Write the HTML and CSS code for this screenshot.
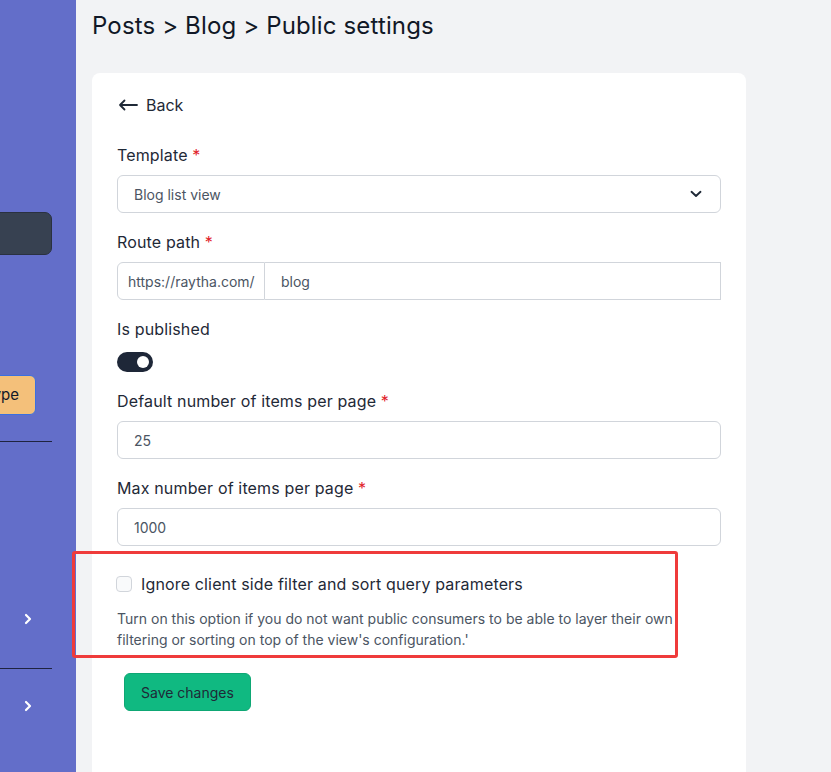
FILE: index.html
```html
<!DOCTYPE html>
<html>
<head>
<meta charset="utf-8">
<link rel="stylesheet" href="styles.css">
</head>
<body>
<div class="layout">
  <aside class="sidebar">
    <div class="sb-dark"></div>
    <div class="sb-orange">Content type</div>
    <hr class="sb-rule sb-rule-1">
    <div class="sb-chev sb-chev-1">
      <svg width="10" height="12" viewBox="0 0 10 12"><path d="M3 2l4 4-4 4" fill="none" stroke="#fff" stroke-width="2.2" stroke-linecap="round" stroke-linejoin="round"/></svg>
    </div>
    <hr class="sb-rule sb-rule-2">
    <div class="sb-chev sb-chev-2">
      <svg width="10" height="12" viewBox="0 0 10 12"><path d="M3 2l4 4-4 4" fill="none" stroke="#fff" stroke-width="2.2" stroke-linecap="round" stroke-linejoin="round"/></svg>
    </div>
  </aside>
  <main class="main">
    <h1 class="title">Posts &gt; Blog &gt; Public settings</h1>
    <section class="card">
      <a class="back">
        <svg width="20" height="12" viewBox="0 0 20 12"><path d="M19 6H2M6.5 1.5L2 6l4.5 4.5" fill="none" stroke="#1f2937" stroke-width="1.8" stroke-linecap="round" stroke-linejoin="round"/></svg>
        <span>Back</span>
      </a>
      <div class="group">
        <label class="label">Template <span class="req">*</span></label>
        <div class="control select">
          <span>Blog list view</span>
          <svg width="12" height="8" viewBox="0 0 12 8"><path d="M1.5 1.8L6 6l4.5-4.2" fill="none" stroke="#1f2937" stroke-width="1.9" stroke-linecap="round" stroke-linejoin="round"/></svg>
        </div>
      </div>
      <div class="group">
        <label class="label">Route path <span class="req">*</span></label>
        <div class="input-group">
          <span class="prefix">https://raytha.com/</span>
          <span class="ig-input">blog</span>
        </div>
      </div>
      <div class="group group-toggle">
        <label class="label">Is published</label>
        <div class="toggle"><span class="knob"></span></div>
      </div>
      <div class="group">
        <label class="label">Default number of items per page <span class="req">*</span></label>
        <div class="control">25</div>
      </div>
      <div class="group">
        <label class="label">Max number of items per page <span class="req">*</span></label>
        <div class="control">1000</div>
      </div>
      <div class="check-section">
        <div class="check-row">
          <span class="checkbox"></span>
          <span class="check-label">Ignore client side filter and sort query parameters</span>
        </div>
        <p class="help">Turn on this option if you do not want public consumers to be able to layer their own filtering or sorting on top of the view's configuration.'</p>
        <div class="highlight"></div>
      </div>
      <button class="save">Save changes</button>
    </section>
  </main>
</div>
</body>
</html>
```

FILE: styles.css
```css
* { box-sizing: border-box; }
html, body { margin: 0; padding: 0; }
body {
  font-family: Inter, "Noto Sans", sans-serif;
  background: #f2f3f5;
  color: #1f2937;
  height: 772px;
  overflow: hidden;
}
.layout { display: flex; height: 772px; }

.sidebar {
  width: 76px;
  flex: 0 0 76px;
  background: #636ec9;
  overflow: hidden;
  display: flex;
  flex-direction: column;
  align-items: flex-end;
  padding-top: 212px;
}
.sb-dark {
  width: 180px;
  height: 43px;
  background: #374151;
  border: 1px solid #2a3140;
  border-radius: 7px;
  margin-right: 24px;
  flex-shrink: 0;
}
.sb-orange {
  width: 170px;
  height: 40px;
  margin-top: 120px;
  margin-right: 40px;
  background: #f4c07a;
  border: 1px solid #3b6fe0;
  border-radius: 6px;
  font-size: 15px;
  line-height: 38px;
  text-align: right;
  padding-right: 16px;
  color: #111827;
  white-space: nowrap;
  flex-shrink: 0;
}
.sb-rule {
  width: 180px;
  margin: 0 24px 0 0;
  border: 0;
  border-top: 1px solid #1f2340;
  flex-shrink: 0;
}
.sb-rule-1 { margin-top: 26px; }
.sb-chev {
  width: 76px;
  display: flex;
  justify-content: flex-start;
  padding-left: 23px;
  flex-shrink: 0;
}
.sb-chev svg { display: block; }
.sb-chev-1 { margin-top: 171px; }
.sb-rule-2 { margin-top: 43px; }
.sb-chev-2 { margin-top: 31px; }

.main {
  flex: 1;
  padding-left: 16px;
}
.title {
  margin: 0;
  padding-top: 11px;
  font-size: 24px;
  font-weight: 400;
  line-height: 30px;
  color: #111827;
  letter-spacing: 0.15px;
}
.card {
  margin-top: 32px;
  width: 654px;
  background: #fff;
  border-radius: 8px;
  padding: 22px 25px 80px 25px;
  min-height: 760px;
}
.back {
  display: flex;
  align-items: center;
  gap: 8px;
  height: 20px;
  font-size: 16px;
  color: #1f2937;
  margin-left: 1px;
}
.back svg { display: block; }
.group { margin-top: 28px; }
.group + .group { margin-top: 17px; }
.label {
  display: block;
  font-size: 16px;
  line-height: 24px;
  margin-bottom: 8px;
  font-weight: 400;
  letter-spacing: 0.15px;
  color: #1f2937;
}
.req { color: #e11d2a; }
.control {
  height: 38px;
  border: 1px solid #d1d5db;
  border-radius: 6px;
  padding: 0 16px;
  display: flex;
  align-items: center;
  font-size: 14px;
  color: #4b5563;
}
.select { justify-content: space-between; padding-right: 18px; }
.select svg { display: block; }
.input-group {
  display: flex;
  height: 38px;
  font-size: 14px;
  color: #4b5563;
}
.prefix {
  width: 148px;
  display: flex;
  align-items: center;
  padding-left: 10px;
  border: 1px solid #d1d5db;
  border-radius: 6px 0 0 6px;
}
.ig-input {
  flex: 1;
  display: flex;
  align-items: center;
  padding-left: 16px;
  border: 1px solid #d1d5db;
  border-left: 0;
}
.group-toggle .label { margin-bottom: 11px; }
.toggle {
  width: 36px;
  height: 20px;
  border-radius: 10px;
  background: #1e2738;
  position: relative;
}
.knob {
  position: absolute;
  right: 4px;
  top: 4px;
  width: 12px;
  height: 12px;
  border-radius: 50%;
  background: #fff;
}

.check-section {
  position: relative;
  margin-top: 30px;
}
.check-row {
  display: flex;
  align-items: center;
  gap: 9px;
  height: 16px;
}
.checkbox {
  width: 16px;
  height: 16px;
  border: 1px solid #d1d5db;
  border-radius: 4px;
  background: #f9fafb;
  margin-left: -1px;
}
.check-label {
  font-size: 16px;
  font-weight: 400;
  letter-spacing: 0.15px;
  color: #1f2937;
}
.help {
  margin: 16px 0 0 0;
  font-size: 14px;
  line-height: 21px;
  color: #4b5563;
  width: 560px;
}
.highlight {
  position: absolute;
  left: -45px;
  top: -25px;
  width: 606px;
  height: 107px;
  border: 3px solid #ef3b3b;
  border-radius: 3px;
  pointer-events: none;
}
.save {
  margin-top: 23px;
  margin-left: 7px;
  height: 38px;
  padding: 0 16px;
  background: #10b981;
  border: 1px solid #0ea774;
  border-radius: 6px;
  font-family: Inter, sans-serif;
  font-size: 14px;
  color: #1f2937;
}
```
